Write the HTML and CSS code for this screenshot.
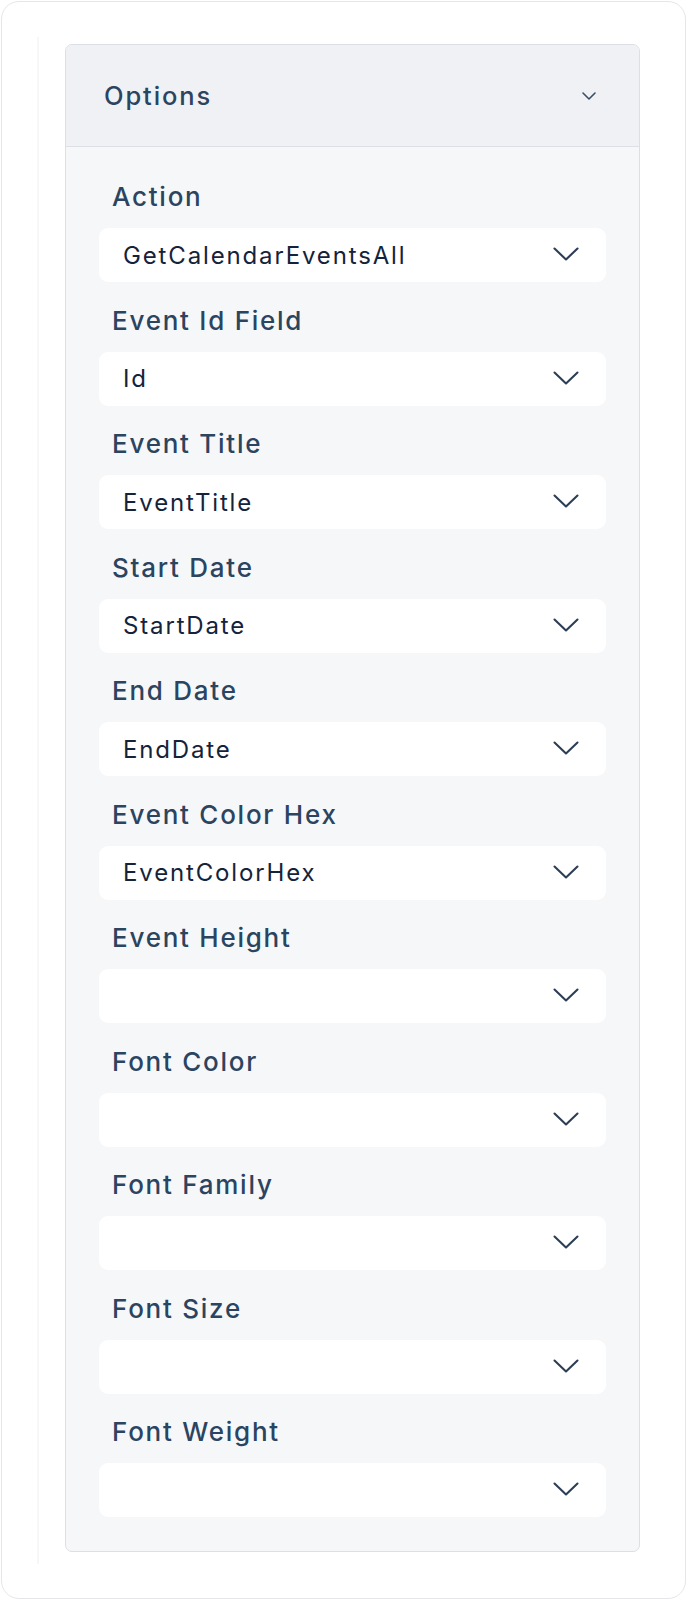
FILE: index.html
```html
<!DOCTYPE html>
<html lang="en">
<head>
<meta charset="utf-8">
<title>Options</title>
<link rel="stylesheet" href="styles.css">
</head>
<body>
<div class="card">
  <div class="wrap">
    <section class="panel">
      <header class="panel-head">
        <span class="panel-title">Options</span>
        <svg class="head-chev" width="14" height="8" viewBox="0 0 14 8"><path d="M1 1l6 6 6-6" fill="none" stroke="#3b4e66" stroke-width="1.6" stroke-linecap="round" stroke-linejoin="round"/></svg>
      </header>
      <div class="panel-body">
        <div class="field"><label class="label">Action</label><div class="select"><span class="value">GetCalendarEventsAll</span><svg class="chev" width="26" height="14" viewBox="0 0 26 14"><path d="M1.5 1.5l11.5 11 11.5-11" fill="none" stroke="#2c3e56" stroke-width="2.1" stroke-linecap="round" stroke-linejoin="round"/></svg></div></div>
        <div class="field"><label class="label">Event Id Field</label><div class="select"><span class="value">Id</span><svg class="chev" width="26" height="14" viewBox="0 0 26 14"><path d="M1.5 1.5l11.5 11 11.5-11" fill="none" stroke="#2c3e56" stroke-width="2.1" stroke-linecap="round" stroke-linejoin="round"/></svg></div></div>
        <div class="field"><label class="label">Event Title</label><div class="select"><span class="value">EventTitle</span><svg class="chev" width="26" height="14" viewBox="0 0 26 14"><path d="M1.5 1.5l11.5 11 11.5-11" fill="none" stroke="#2c3e56" stroke-width="2.1" stroke-linecap="round" stroke-linejoin="round"/></svg></div></div>
        <div class="field"><label class="label">Start Date</label><div class="select"><span class="value">StartDate</span><svg class="chev" width="26" height="14" viewBox="0 0 26 14"><path d="M1.5 1.5l11.5 11 11.5-11" fill="none" stroke="#2c3e56" stroke-width="2.1" stroke-linecap="round" stroke-linejoin="round"/></svg></div></div>
        <div class="field"><label class="label">End Date</label><div class="select"><span class="value">EndDate</span><svg class="chev" width="26" height="14" viewBox="0 0 26 14"><path d="M1.5 1.5l11.5 11 11.5-11" fill="none" stroke="#2c3e56" stroke-width="2.1" stroke-linecap="round" stroke-linejoin="round"/></svg></div></div>
        <div class="field"><label class="label">Event Color Hex</label><div class="select"><span class="value">EventColorHex</span><svg class="chev" width="26" height="14" viewBox="0 0 26 14"><path d="M1.5 1.5l11.5 11 11.5-11" fill="none" stroke="#2c3e56" stroke-width="2.1" stroke-linecap="round" stroke-linejoin="round"/></svg></div></div>
        <div class="field"><label class="label">Event Height</label><div class="select"><span class="value"></span><svg class="chev" width="26" height="14" viewBox="0 0 26 14"><path d="M1.5 1.5l11.5 11 11.5-11" fill="none" stroke="#2c3e56" stroke-width="2.1" stroke-linecap="round" stroke-linejoin="round"/></svg></div></div>
        <div class="field"><label class="label">Font Color</label><div class="select"><span class="value"></span><svg class="chev" width="26" height="14" viewBox="0 0 26 14"><path d="M1.5 1.5l11.5 11 11.5-11" fill="none" stroke="#2c3e56" stroke-width="2.1" stroke-linecap="round" stroke-linejoin="round"/></svg></div></div>
        <div class="field"><label class="label">Font Family</label><div class="select"><span class="value"></span><svg class="chev" width="26" height="14" viewBox="0 0 26 14"><path d="M1.5 1.5l11.5 11 11.5-11" fill="none" stroke="#2c3e56" stroke-width="2.1" stroke-linecap="round" stroke-linejoin="round"/></svg></div></div>
        <div class="field"><label class="label">Font Size</label><div class="select"><span class="value"></span><svg class="chev" width="26" height="14" viewBox="0 0 26 14"><path d="M1.5 1.5l11.5 11 11.5-11" fill="none" stroke="#2c3e56" stroke-width="2.1" stroke-linecap="round" stroke-linejoin="round"/></svg></div></div>
        <div class="field"><label class="label">Font Weight</label><div class="select"><span class="value"></span><svg class="chev" width="26" height="14" viewBox="0 0 26 14"><path d="M1.5 1.5l11.5 11 11.5-11" fill="none" stroke="#2c3e56" stroke-width="2.1" stroke-linecap="round" stroke-linejoin="round"/></svg></div></div>
      </div>
    </section>
  </div>
</div>
</body>
</html>
```
FILE: styles.css
```css
* { box-sizing: border-box; }
html, body { margin: 0; padding: 0; background: #ffffff; }
body { font-family: Inter, "Noto Sans", sans-serif; }

.card {
  margin: 1px;
  height: 1598px;
  border: 1.5px solid #e4e6ea;
  border-radius: 18px;
  background: #ffffff;
  padding: 35px 0 0 35px;
}

.wrap {
  width: 628px;
  height: 1527px;
  border-left: 2px solid #f7f7f8;
  padding: 7px 0 0 26px;
}

.panel {
  width: 575px;
  border: 1.5px solid #dcdfe5;
  border-radius: 7px;
  background: #f6f7f9;
  overflow: hidden;
}

.panel-head {
  height: 102px;
  background: #f0f1f4;
  border-bottom: 1.5px solid #dcdfe5;
  display: flex;
  align-items: center;
  justify-content: space-between;
  padding: 0 43px 0 38px;
}

.panel-title {
  font-size: 25.5px;
  font-weight: 500;
  color: #2b4460;
  letter-spacing: 1.9px;
}

.head-chev { display: block; }

.panel-body {
  padding: 35px 33px 34px 33px;
  display: flex;
  flex-direction: column;
  gap: 23.5px;
}

.field { display: flex; flex-direction: column; }

.label {
  height: 30px;
  line-height: 30px;
  margin-bottom: 16px;
  padding-left: 13px;
  font-size: 26px;
  font-weight: 500;
  color: #2b4460;
  letter-spacing: 1.75px;
}

.select {
  height: 54px;
  background: #ffffff;
  border-radius: 9px;
  display: flex;
  align-items: center;
  justify-content: space-between;
  padding: 0 27px 0 24px;
}

.value {
  font-size: 24px;
  font-weight: 400;
  color: #14233a;
  letter-spacing: 1.85px;
}

.chev { display: block; margin-top: -2px; }
```
